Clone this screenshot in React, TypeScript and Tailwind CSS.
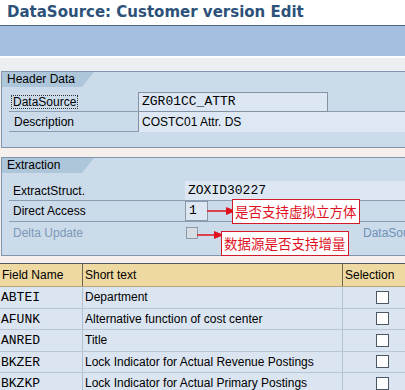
import React from 'react';

const rows = [
    { name: 'ABTEI', text: 'Department' },
    { name: 'AFUNK', text: 'Alternative function of cost center' },
    { name: 'ANRED', text: 'Title' },
    { name: 'BKZER', text: 'Lock Indicator for Actual Revenue Postings' },
    { name: 'BKZKP', text: 'Lock Indicator for Actual Primary Postings' },
];

const sans = "font-['Liberation_Sans',Arial,sans-serif]";
const mono = "font-['Liberation_Mono','Courier_New',monospace]";

const GroupTab = ({ label }: { label: string }) => (
    <div className="relative h-[15px] w-[92px]">
        <div className="absolute inset-0 bg-[#aec6da] [clip-path:polygon(0_0,100%_0,calc(100%-12px)_100%,0_100%)]" />
        <span className="relative block pl-[5px] text-[12px] leading-[15px] text-black">{label}</span>
    </div>
);

const Arrow = ({ width }: { width: number }) => (
    <svg width={width} height="10" viewBox={`0 0 ${width} 10`}>
        <line x1="0" y1="5" x2={width - 8} y2="5" stroke="#e0101e" strokeWidth="1.5" />
        <polygon points={`${width - 10},1 ${width},5 ${width - 10},9`} fill="#e0101e" />
    </svg>
);

const App = () => {
    return (
        <div className={`${sans} relative w-[405px] h-[390px] overflow-hidden bg-[#f6f0ec]`}>
            {/* title */}
            <div className="h-[26px] bg-white border-b border-[#4d6a88] pl-[7px]">
                <h1 className="font-['DejaVu_Sans',sans-serif] font-bold text-[15px] leading-[24px] text-[#2c5279]">
                    DataSource: Customer version Edit
                </h1>
            </div>
            <div className="h-[30px] bg-[#a5bfe0]" />
            <div className="h-[15px] border-t-2 border-white bg-[#eceef1]" />

            {/* Header Data */}
            <div className="ml-[1px] w-[430px] h-[77px] border border-[#8196ad] bg-[#cbdbea]">
                <GroupTab label="Header Data" />
                <div className="pl-[7px] pt-[5px]">
                    <div className="flex h-[20px] border-b border-[#8a9db2]">
                        <div className="w-[129px] pl-[2px] flex items-center">
                            <span className="border border-dotted border-[#333] px-[1px] text-[12px] leading-[12px] text-black">DataSource</span>
                        </div>
                        <div className={`${mono} w-[190px] h-[20px] border border-[#8493a4] bg-[#dce7f3] pl-[3px] text-[13px] leading-[18px] text-black`}>
                            ZGR01CC_ATTR
                        </div>
                    </div>
                    <div className="flex h-[20px] border-b border-[#8a9db2]">
                        <div className="w-[129px] pl-[5px] text-[12px] leading-[20px] text-black">Description</div>
                        <div className="flex-1 h-[20px] border-l border-[#8493a4] bg-[#dde8f4] pl-[3px] text-[12px] leading-[20px] text-black">
                            COSTC01 Attr. DS
                        </div>
                    </div>
                </div>
            </div>

            <div className="h-[9px]" />

            {/* Extraction */}
            <div className="ml-[1px] w-[430px] h-[99px] border border-[#8196ad] bg-[#cbdbea]">
                <GroupTab label="Extraction" />
                <div className="pl-[7px] pt-[8px]">
                    <div className="flex h-[20px] border-b border-[#8a9db2]">
                        <div className="w-[176px] pl-[4px] text-[12px] leading-[21px] text-black">ExtractStruct.</div>
                        <div className={`${mono} flex-1 bg-[#dce7f3] pl-[3px] text-[13px] leading-[20px] text-black`}>ZOXID30227</div>
                    </div>
                    <div className="flex h-[21px] border-b border-[#8a9db2]">
                        <div className="w-[176px] pl-[4px] text-[12px] leading-[21px] text-black">Direct Access</div>
                        <div className={`${mono} w-[23px] h-[20px] border border-[#8a98a8] bg-[#dce7f3] pl-[3px] text-[13px] leading-[18px] text-black`}>1</div>
                    </div>
                    <div className="flex h-[22px] items-center">
                        <div className="w-[177px] pl-[4px] text-[12px] text-[#7d98b6]">Delta Update</div>
                        <div className="w-[12px] h-[12px] border border-[#8c98a4] bg-[#d6dde5]" />
                        <div className="ml-[165px] text-[12px] text-[#6f91b6]">DataSource</div>
                    </div>
                </div>
            </div>

            <div className="h-[7px]" />

            {/* table */}
            <div className="border-t border-[#51585f] text-[12px]">
                <div className="flex h-[23px] bg-[#efd9a2] border-b border-[#b8a678] leading-[22px] text-black">
                    <div className="w-[83px] pl-[2px] border-r border-[#6d6650]">Field Name</div>
                    <div className="w-[260px] pl-[2px] border-r border-[#6d6650]">Short text</div>
                    <div className="flex-1 pl-[2px]">Selection</div>
                </div>
                {rows.map((r) => (
                    <div key={r.name} className="flex h-[21.5px] bg-[#dbe5f1] border-b border-[#b9c6d4] items-stretch">
                        <div className={`${mono} w-[83px] pl-[1px] border-r border-[#b2c0cf] text-[13px] leading-[21px] text-black`}>{r.name}</div>
                        <div className="w-[260px] pl-[2px] border-r border-[#b2c0cf] leading-[21px] text-black">{r.text}</div>
                        <div className="flex-1 flex items-center pl-[33px]">
                            <div className="w-[13px] h-[13px] border border-[#4a5866] bg-white" />
                        </div>
                    </div>
                ))}
            </div>

            {/* annotations */}
            <div className="absolute left-[207px] top-[206px]">
                <Arrow width={29} />
            </div>
            <div className="absolute left-[232px] top-[199px] h-[25px] px-[2px] border border-[#d21a2b] bg-white font-['Noto_Sans_CJK_SC',sans-serif] text-[13.5px] leading-[22px] text-[#e0101e]">
                是否支持虚拟立方体
            </div>
            <div className="absolute left-[197px] top-[230px]">
                <Arrow width={27} />
            </div>
            <div className="absolute left-[221px] top-[231px] h-[25px] px-[2px] border border-[#d21a2b] bg-white font-['Noto_Sans_CJK_SC',sans-serif] text-[13.5px] leading-[22px] text-[#e0101e]">
                数据源是否支持增量
            </div>
        </div>
    );
};

export default App;
